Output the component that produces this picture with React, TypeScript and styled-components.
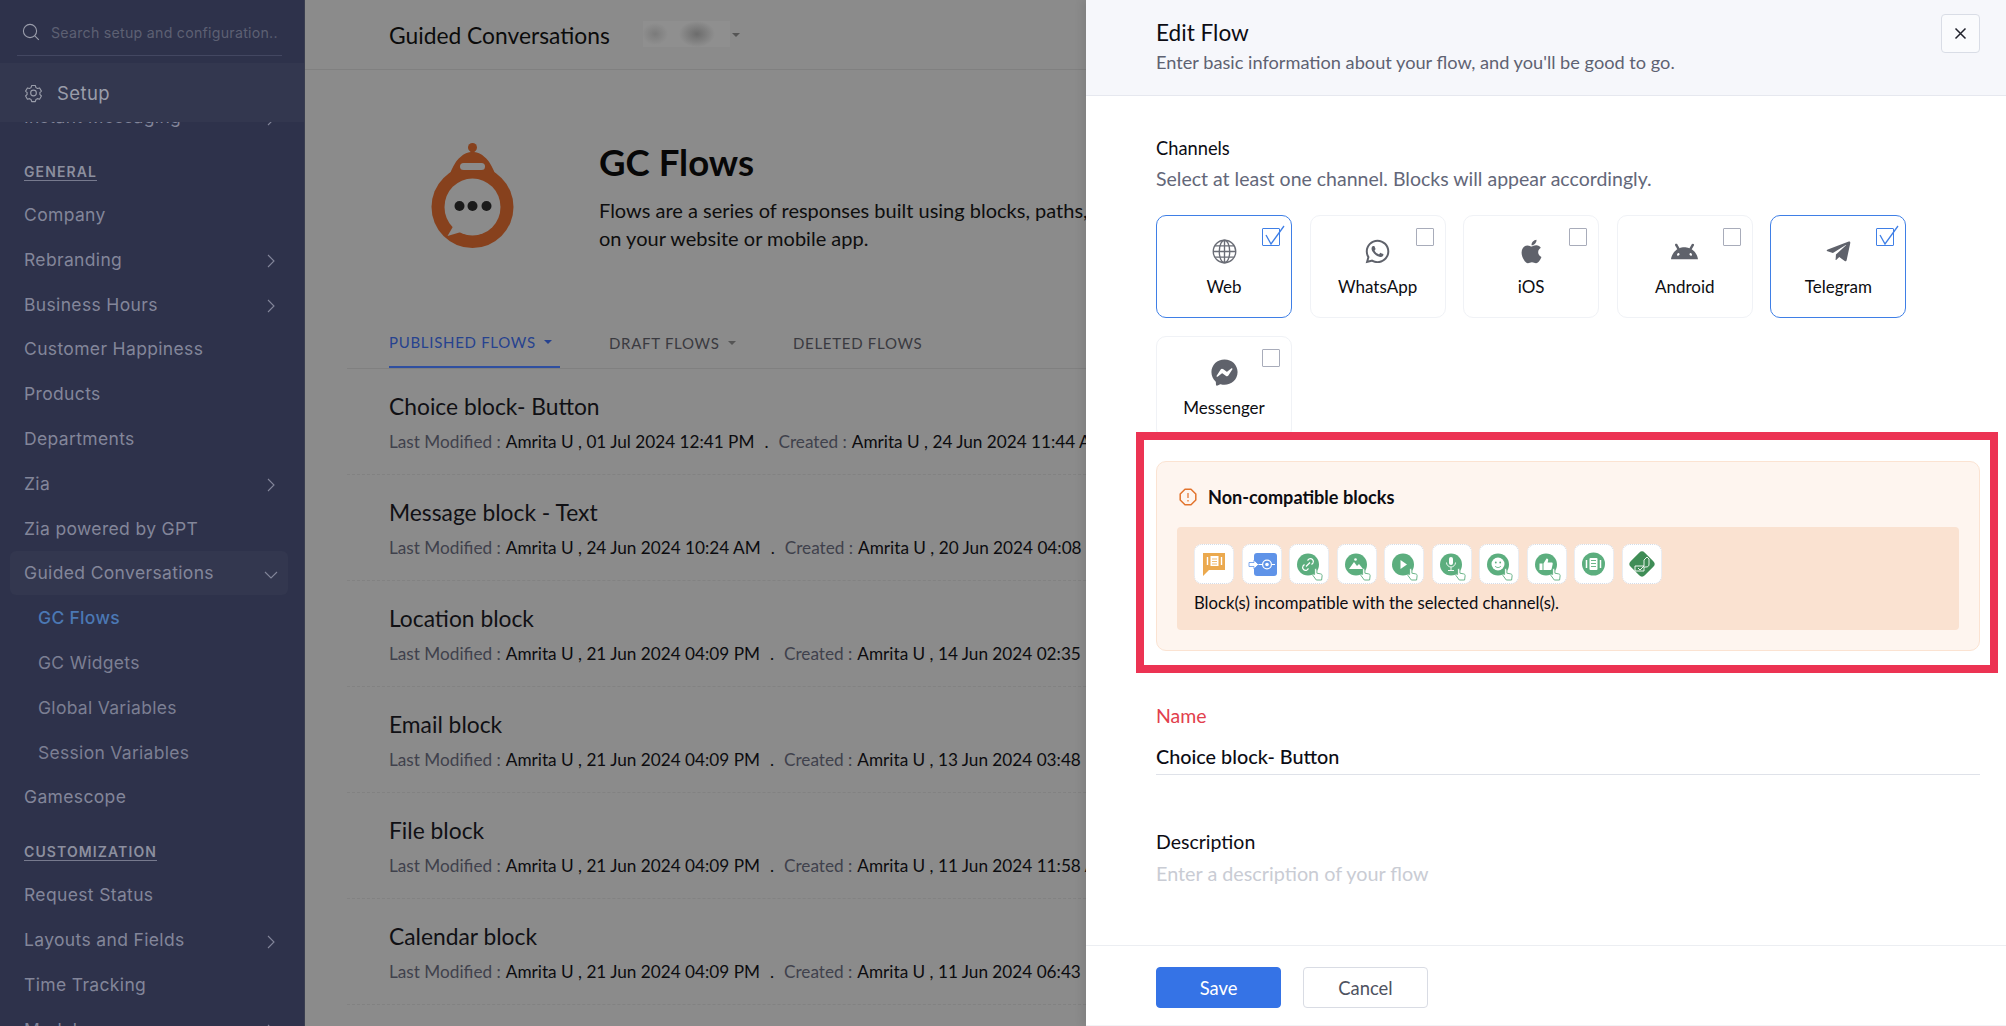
import React from 'react';
import styled, { createGlobalStyle } from 'styled-components';
import { FaWhatsapp, FaApple, FaTelegramPlane, FaFacebookMessenger } from 'react-icons/fa';
import { SiAndroid } from 'react-icons/si';

const Global = createGlobalStyle`
  html, body { margin: 0; padding: 0; height: 100%; overflow: hidden; background: #8b8b8b; }
  * { box-sizing: border-box; }
  body { font-family: Lato, "Open Sans", sans-serif; }
`;

const Page = styled.div`
  display: flex;
  width: 2006px;
  height: 1026px;
  overflow: hidden;
`;

/* ---------- sidebar ---------- */
const Sidebar = styled.aside`
  flex: none;
  width: 305px;
  height: 100%;
  display: flex;
  flex-direction: column;
  background: #2e324b;
  border-right: 1px solid #3a3e50;
  font-family: Inter, Roboto, sans-serif;
  overflow: hidden;
`;
const SearchBar = styled.div`
  flex: none;
  height: 63px;
  padding: 0 22px 0 17px;
`;
const SearchInner = styled.div`
  height: 56px;
  display: flex;
  align-items: center;
  gap: 11px;
  padding: 9px 0 0 5px;
  border-bottom: 1px solid #434761;
  color: #5d6073;
  font-size: 14.2px;
  letter-spacing: 0.25px;
  white-space: nowrap;
`;
const SetupBar = styled.div`
  flex: none;
  height: 59px;
  display: flex;
  align-items: center;
  gap: 14px;
  padding: 1px 0 0 24px;
  background: #33374f;
  color: #9a9daa;
  font-size: 18.5px;
  letter-spacing: 0.4px;
`;
const NavScroll = styled.div`
  flex: 1;
  min-height: 0;
  overflow: hidden;
  padding: 0 16px 0 10px;
`;
const NavInner = styled.nav`
  margin-top: -27.8px;
`;
const NavRow = styled.div<{ $open?: boolean }>`
  height: 44.8px;
  display: flex;
  align-items: center;
  justify-content: space-between;
  padding: 0 10px 0 14px;
  border-radius: 6px;
  color: #83869a;
  font-size: 17.5px;
  letter-spacing: 0.35px;
  white-space: nowrap;
  background: ${p => (p.$open ? '#33374f' : 'transparent')};
`;
const SubRow = styled.div<{ $active?: boolean }>`
  height: 44.8px;
  display: flex;
  align-items: center;
  padding-left: 28px;
  color: ${p => (p.$active ? '#4b78b4' : '#7c7f93')};
  font-size: 17.5px;
  letter-spacing: 0.3px;
  font-weight: ${p => (p.$active ? 500 : 400)};
  white-space: nowrap;
`;
const SectionHead = styled.div`
  height: 22px;
  margin: 21.6px 0 9.6px;
  padding-left: 14px;
  display: flex;
  align-items: center;
`;
const SectionLabel = styled.span`
  color: #8c8f9f;
  font-size: 14px;
  font-weight: 600;
  letter-spacing: 1.1px;
  border-bottom: 1px solid #777a8e;
  line-height: 17px;
`;

const Chevron = ({ down }: { down?: boolean }) => (
  <svg width="14" height="14" viewBox="0 0 14 14" fill="none" stroke="#83869a" strokeWidth="1.1" style={{ marginTop: 4 }}>
    {down ? <path d="M1 4l6 6 6-6" /> : <path d="M4 1l6 6-6 6" />}
  </svg>
);

/* ---------- main (dimmed) ---------- */
const Main = styled.main`
  flex: 1;
  min-width: 0;
  height: 100%;
  overflow: hidden;
  background: #8b8b8b;
`;
const TopBar = styled.header`
  height: 70px;
  padding-left: 84px;
  display: flex;
  align-items: center;
  border-bottom: 1px solid #808080;
`;
const TopTitle = styled.h1`
  margin: 1px 0 0;
  font-size: 22.8px;
  font-weight: 400;
  color: #0b0b0b;
  white-space: nowrap;
`;
const Redacted = styled.div`
  width: 87px;
  height: 26px;
  margin: 0 0 2px 33px;
  background:
    radial-gradient(ellipse 18px 13px at 62% 50%, #6c6c6c 0%, rgba(120, 120, 120, 0) 100%),
    radial-gradient(ellipse 13px 11px at 14% 50%, #7b7b7b 0%, rgba(130, 130, 130, 0) 100%),
    #8f8f8f;
`;
const Caret = styled.span<{ $color?: string }>`
  display: inline-block;
  width: 0;
  height: 0;
  border-left: 4px solid transparent;
  border-right: 4px solid transparent;
  border-top: 4px solid ${p => p.$color ?? '#555'};
`;
const TopCaret = styled(Caret)`
  margin: 0 0 0 2px;
`;
const Hero = styled.section`
  height: 248px;
  padding: 73px 0 0 126px;
  display: flex;
  gap: 85px;
`;
const HeroText = styled.div`
  margin-top: -3px;
  white-space: nowrap;
`;
const HeroTitle = styled.h2`
  margin: 0 0 12px;
  font-size: 36.6px;
  line-height: 44px;
  font-weight: 700;
  color: #070707;
`;
const HeroPara = styled.p`
  margin: 0;
  font-size: 20px;
  line-height: 28px;
  color: #0e0e0e;
`;
const ListArea = styled.div`
  margin-left: 42px;
`;
const Tabs = styled.div`
  height: 51px;
  display: flex;
  padding-left: 42px;
  border-bottom: 1px solid #808080;
`;
const Tab = styled.div<{ $active?: boolean; $w: number }>`
  width: ${p => p.$w}px;
  height: 50px;
  display: flex;
  align-items: center;
  gap: 8px;
  font-size: 15px;
  letter-spacing: 0.7px;
  white-space: nowrap;
  color: ${p => (p.$active ? '#26428f' : '#3a3a40')};
  border-bottom: ${p => (p.$active ? '2px solid #2f4fa0' : 'none')};
`;
const TabGap = styled.div<{ $w: number }>`
  flex: none;
  width: ${p => p.$w}px;
`;
const FlowRow = styled.div`
  height: 106px;
  padding: 23px 0 0 42px;
  border-bottom: 1px dashed #828282;
  white-space: nowrap;
`;
const FlowTitle = styled.div`
  font-size: 22.8px;
  line-height: 28px;
  color: #101014;
`;
const FlowMeta = styled.div`
  margin-top: 12px;
  font-size: 17.2px;
  line-height: 20px;
  color: #3f414c;
  display: flex;
`;
const MetaValue = styled.span`
  color: #0c0c0f;
  margin-left: 5px;
`;
const MetaDot = styled.span`
  color: #0c0c0f;
  margin: 0 10px;
`;

/* ---------- drawer ---------- */
const Drawer = styled.aside`
  flex: none;
  width: 920px;
  height: 100%;
  display: flex;
  flex-direction: column;
  background: #fff;
  box-shadow: -4px 0 8px rgba(0, 0, 0, 0.08);
  position: relative;
`;
const DrawerHead = styled.header`
  flex: none;
  height: 96px;
  padding: 18px 26px 0 70px;
  display: flex;
  justify-content: space-between;
  align-items: flex-start;
  background: #f6f7fb;
  border-bottom: 1px solid #e6e8ef;
`;
const DrawerTitle = styled.h2`
  margin: 0;
  font-size: 22.6px;
  line-height: 30px;
  font-weight: 400;
  color: #0c0c14;
`;
const DrawerSub = styled.p`
  margin: -1px 0 0;
  font-size: 18.2px;
  line-height: 30px;
  color: #5e6272;
`;
const CloseButton = styled.button`
  width: 39px;
  height: 39px;
  margin-top: -4px;
  padding: 0;
  display: flex;
  align-items: center;
  justify-content: center;
  background: #fafbfd;
  border: 1px solid #d9dde6;
  border-radius: 4px;
`;
const DrawerBody = styled.div`
  flex: 1;
  min-height: 0;
  padding: 39px 26px 0 70px;
`;
const GroupTitle = styled.div`
  font-size: 18.3px;
  line-height: 26px;
  color: #0c0c14;
`;
const GroupHint = styled.div`
  margin-top: 5px;
  font-size: 19.5px;
  line-height: 26px;
  color: #636779;
`;
const Cards = styled.div`
  margin-top: 23px;
  display: flex;
  flex-wrap: wrap;
  gap: 18px 17.6px;
`;
const Card = styled.div<{ $on?: boolean }>`
  position: relative;
  width: 136px;
  height: 103px;
  display: flex;
  flex-direction: column;
  align-items: center;
  padding-top: 22px;
  border-radius: 10px;
  border: ${p => (p.$on ? '1.5px solid #3f7fe6' : '1.5px solid #f0f2f6')};
`;
const CardIcon = styled.div`
  height: 26px;
  display: flex;
  align-items: center;
  justify-content: center;
  color: #5f626b;
  font-size: 27px;
`;
const CardLabel = styled.div`
  margin-top: 11px;
  font-size: 17px;
  line-height: 24px;
  color: #0d0d12;
`;
const Check = styled.div<{ $on?: boolean }>`
  position: absolute;
  top: 12px;
  right: 11px;
  width: 18px;
  height: 18px;
  border-radius: 1px;
  border: 1.5px solid ${p => (p.$on ? '#3f7fe6' : '#a8acba')};
`;
const Tick = styled.svg`
  position: absolute;
  top: -5.5px;
  left: -1.5px;
`;
const WarnWrap = styled.div`
  position: relative;
  margin-top: 22px;
`;
const RedFrame = styled.div`
  position: absolute;
  top: -29px;
  left: -20px;
  right: -18px;
  bottom: -22px;
  border: 8px solid #ec3353;
  pointer-events: none;
`;
const WarnPanel = styled.div`
  height: 190px;
  padding: 23px 20px 0;
  background: #fef5ef;
  border: 1px solid #fbe3d2;
  border-radius: 10px;
`;
const WarnHead = styled.div`
  height: 24px;
  margin-bottom: 18px;
  display: flex;
  align-items: center;
  gap: 11px;
  padding-left: 2px;
  font-size: 18.1px;
  font-weight: 700;
  color: #0c0c12;
`;
const WarnBox = styled.div`
  height: 103px;
  padding: 17px 17px 0;
  background: #fae2d1;
  border-radius: 4px;
`;
const Tiles = styled.div`
  display: flex;
  gap: 7.5px;
`;
const Tile = styled.div`
  width: 40px;
  height: 40px;
  background: #fff;
  border: 1px dotted #d3dce8;
  border-radius: 8px;
`;
const WarnText = styled.div`
  margin-top: 7px;
  font-size: 16.7px;
  line-height: 24px;
  color: #0c0c12;
`;
const Field = styled.div<{ $top: number }>`
  margin-top: ${p => p.$top}px;
`;
const FieldLabel = styled.div<{ $req?: boolean }>`
  font-size: 19.5px;
  line-height: 24px;
  color: ${p => (p.$req ? '#e2404d' : '#0c0c14')};
`;
const FieldValue = styled.div`
  margin-top: 15px;
  height: 32px;
  font-size: 19.8px;
  font-weight: 500;
  line-height: 26px;
  color: #0c0c14;
  border-bottom: 1.5px solid #dfe2e9;
`;
const FieldPlaceholder = styled.div`
  margin-top: 6px;
  font-size: 19.8px;
  line-height: 26px;
  color: #c9ccd4;
`;
const DrawerFoot = styled.footer`
  flex: none;
  height: 81px;
  padding: 21px 70px 0;
  display: flex;
  gap: 22px;
  border-top: 1.5px solid #eceef2;
  border-bottom: 1.5px solid #f2f3f6;
`;
const Button = styled.button<{ $primary?: boolean }>`
  width: 125px;
  height: 41px;
  font-family: inherit;
  font-size: 18.4px;
  border-radius: 4px;
  padding: 0;
  color: ${p => (p.$primary ? '#fff' : '#4e5260')};
  background: ${p => (p.$primary ? '#3573e6' : '#fff')};
  border: ${p => (p.$primary ? '1px solid #3573e6' : '1.5px solid #d9dce4')};
`;

/* ---------- drawings ---------- */
const SearchIcon = () => (
  <svg width="18" height="18" viewBox="0 0 18 18" fill="none" stroke="#9a9dab" strokeWidth="1.1">
    <circle cx="8" cy="8" r="6.6" />
    <path d="M12.8 12.8l4 4" />
  </svg>
);
const GearIcon = () => (
  <svg width="19" height="20" viewBox="0 0 24 24" fill="none" stroke="#9a9daa" strokeWidth="1.4" strokeLinejoin="round">
    <path d="M9.7 2.5h4.6l.8 2.7 1.9 1.1 2.7-.7 2.3 4-2 2 .1 1.1-.1 1.1 2 2-2.3 4-2.7-.7-1.9 1.1-.8 2.7H9.7l-.8-2.7-1.9-1.1-2.7.7-2.3-4 2-2-.1-1.1.1-1.1-2-2 2.3-4 2.7.7 1.9-1.1z" />
    <circle cx="12" cy="12" r="3.6" />
  </svg>
);
const GlobeIcon = () => (
  <svg width="25" height="25" viewBox="0 0 24 24" fill="none" stroke="#6a6d76" strokeWidth="1.3">
    <circle cx="12" cy="12" r="10.8" />
    <ellipse cx="12" cy="12" rx="5" ry="10.8" />
    <path d="M12 1.2v21.6M1.2 12h21.6M2.8 6.6h18.4M2.8 17.4h18.4" />
  </svg>
);
const CloseIcon = () => (
  <svg width="13" height="13" viewBox="0 0 13 13" stroke="#20222c" strokeWidth="1.5">
    <path d="M1.5 1.5l10 10M11.5 1.5l-10 10" />
  </svg>
);
const AlertIcon = () => (
  <svg width="18" height="18" viewBox="0 0 18 18" fill="none">
    <path d="M6 1.2h6L16.8 6v6L12 16.8H6L1.2 12V6z" stroke="#e2732c" strokeWidth="1.5" strokeLinejoin="round" />
    <path d="M9 5v5M9 12v1.4" stroke="#e2732c" strokeWidth="1.2" />
  </svg>
);
const Logo = () => (
  <svg width="83" height="105" viewBox="0 0 82 105" style={{ flex: 'none' }}>
    <circle cx="41" cy="4.5" r="4.5" fill="#87411d" />
    <rect x="39" y="4" width="4" height="8" fill="#87411d" />
    <path d="M15 40Q22 19 29 14Q34 9 41 9Q48 9 53 14Q60 19 67 40Z" fill="#87411d" />
    <ellipse cx="41" cy="64" rx="41" ry="41" fill="#87411d" />
    <rect x="28.5" y="20" width="25" height="7" rx="3.5" fill="#8b8b8b" />
    <ellipse cx="41" cy="64" rx="28" ry="28.5" fill="#8b8b8b" />
    <path d="M23 81L16 93L33 88Z" fill="#8b8b8b" />
    <circle cx="28" cy="63" r="5" fill="#1a1a1a" />
    <circle cx="41" cy="63" r="5" fill="#1a1a1a" />
    <circle cx="55" cy="63" r="5" fill="#1a1a1a" />
  </svg>
);

const Hand = () => (
  <path
    d="M25.5 23.5c.9 0 1.4.6 1.4 1.4v3.3l3.8.7c1 .2 1.5.9 1.4 1.9l-.5 4.2H26.3l-3.4-4.6c-.6-.9.6-1.8 1.4-1.1l.3.3v-4.7c0-.8.3-1.4.9-1.4z"
    fill="#fff"
    stroke="#5cae7e"
    strokeWidth="0.9"
  />
);
const GreenDot = () => <circle cx="18" cy="19.5" r="11" fill="#5cae7e" />;

const BlockGlyph = ({ kind }: { kind: string }) => {
  const w = { stroke: '#fff', strokeWidth: 1.2, fill: 'none' } as const;
  return (
    <svg width="38" height="38" viewBox="0 0 38 38">
      {kind === 'carousel' && (
        <>
          <path d="M8 8h22v17H14l-6 6z" fill="#eba94e" />
          <rect x="15.5" y="11" width="8" height="10" fill="#fff" />
          <path d="M12.5 12v8M26.5 12v8" stroke="#fff" strokeWidth="1.4" />
          <path d="M17 14h5M17 16.5h5M17 19h5" stroke="#eba94e" strokeWidth="0.8" />
        </>
      )}
      {kind === 'goto' && (
        <>
          <rect x="11" y="8" width="23" height="23" rx="3" fill="#5f93e8" />
          <path d="M6 17.5h5V15l4.5 4.5L11 24v-2.5H6z" fill="#fff" stroke="#5f93e8" strokeWidth="0.8" />
          <path d="M15.5 19.5h4M29 19.5h3" stroke="#fff" strokeWidth="1.2" />
          <circle cx="24" cy="19.5" r="4.4" {...w} />
          <circle cx="24" cy="19.5" r="1.8" fill="#fff" />
        </>
      )}
      {kind === 'link' && (
        <>
          <GreenDot />
          <path d="M16 21.500l4-4M14.500 19.500l-1.400 1.400a2.900 2.900 0 0 0 4 4l1.400-1.400M21.500 19.500l1.400-1.400a2.900 2.900 0 0 0-4-4l-1.400 1.400" {...w} />
          <Hand />
        </>
      )}
      {kind === 'image' && (
        <>
          <GreenDot />
          <path d="M11 24l5-7 3 4 2-2 4 5z" fill="#fff" />
          <circle cx="17.5" cy="14.5" r="1.3" fill="#fff" />
          <Hand />
        </>
      )}
      {kind === 'video' && (
        <>
          <GreenDot />
          <path d="M15.5 15l6.5 4.5-6.500 4.500z" fill="#fff" />
          <Hand />
        </>
      )}
      {kind === 'audio' && (
        <>
          <GreenDot />
          <rect x="16" y="12" width="4" height="8" rx="2" fill="#fff" />
          <path d="M13.5 17.5a4.500 4.500 0 0 0 9 0M18 22v3M15 25.500h6" stroke="#fff" strokeWidth="0.9" fill="none" />
          <Hand />
        </>
      )}
      {kind === 'smile' && (
        <>
          <GreenDot />
          <circle cx="18" cy="19" r="6.5" fill="#fff" />
          <circle cx="15.8" cy="17.5" r="0.9" fill="#5cae7e" />
          <circle cx="20.2" cy="17.5" r="0.9" fill="#5cae7e" />
          <path d="M15 21c1.500 2 4.500 2 6 0" stroke="#5cae7e" strokeWidth="0.9" fill="none" />
          <Hand />
        </>
      )}
      {kind === 'like' && (
        <>
          <GreenDot />
          <path d="M11.5 18.5h3V25h-3zM15.5 18.5l3-5c1.400 0 2 .9 1.600 2.200l-.5 1.800h4c.9 0 1.300.7 1.100 1.500l-1.100 5c-.2.600-.6 1-1.200 1h-6.900z" fill="#fff" />
          <Hand />
        </>
      )}
      {kind === 'form' && (
        <>
          <circle cx="18.5" cy="19" r="11.5" fill="#5cae7e" />
          <rect x="14.5" y="13" width="8" height="12" rx="1" fill="#fff" />
          <path d="M11.5 15v8M25.5 15v8" stroke="#fff" strokeWidth="1.5" />
          <path d="M16 15.5h5M16 18.5h5M16 21.5h5" stroke="#5cae7e" strokeWidth="0.9" />
        </>
      )}
      {kind === 'path' && (
        <>
          <rect x="9" y="9" width="20" height="20" rx="4" fill="#3f8d56" transform="rotate(45 19 19)" />
          <path d="M12 26v-5h9v-6l3-3 2 2v5c0 2-1 3-3 3h-2v4z" stroke="#fff" strokeWidth="0.9" fill="none" />
          <path d="M15 23l2 2 4-4" stroke="#fff" strokeWidth="0.9" fill="none" />
        </>
      )}
    </svg>
  );
};

/* ---------- data ---------- */
const generalTop = ['Company', 'Rebranding', 'Business Hours', 'Customer Happiness', 'Products', 'Departments', 'Zia', 'Zia powered by GPT'];
const withArrow = new Set(['Rebranding', 'Business Hours', 'Zia', 'Layouts and Fields', 'Instant Messaging', 'Modules']);
const sub = ['GC Flows', 'GC Widgets', 'Global Variables', 'Session Variables'];
const custom = ['Request Status', 'Layouts and Fields', 'Time Tracking', 'Modules'];
const channels = [
  { name: 'Web', on: true, icon: <GlobeIcon /> },
  { name: 'WhatsApp', icon: <FaWhatsapp /> },
  { name: 'iOS', icon: <FaApple /> },
  { name: 'Android', icon: <SiAndroid /> },
  { name: 'Telegram', on: true, icon: <FaTelegramPlane /> },
  { name: 'Messenger', icon: <FaFacebookMessenger /> },
];
const blocks = ['carousel', 'goto', 'link', 'image', 'video', 'audio', 'smile', 'like', 'form', 'path'];
const flows = [
  ['Choice block- Button', '01 Jul 2024 12:41 PM', '24 Jun 2024 11:44 AM'],
  ['Message block - Text', '24 Jun 2024 10:24 AM', '20 Jun 2024 04:08 PM'],
  ['Location block', '21 Jun 2024 04:09 PM', '14 Jun 2024 02:35 PM'],
  ['Email block', '21 Jun 2024 04:09 PM', '13 Jun 2024 03:48 PM'],
  ['File block', '21 Jun 2024 04:09 PM', '11 Jun 2024 11:58 AM'],
  ['Calendar block', '21 Jun 2024 04:09 PM', '11 Jun 2024 06:43 PM'],
];

const Row = ({ label }: { label: string }) => (
  <NavRow>
    <span>{label}</span>
    {withArrow.has(label) && <Chevron />}
  </NavRow>
);

export default function App() {
  return (
    <Page>
      <Global />
      <Sidebar>
        <SearchBar>
          <SearchInner>
            <SearchIcon />
            <span>Search setup and configuration..</span>
          </SearchInner>
        </SearchBar>
        <SetupBar>
          <GearIcon />
          <span>Setup</span>
        </SetupBar>
        <NavScroll>
          <NavInner>
            <Row label="Instant Messaging" />
            <SectionHead><SectionLabel>GENERAL</SectionLabel></SectionHead>
            {generalTop.map(l => <Row key={l} label={l} />)}
            <NavRow $open>
              <span>Guided Conversations</span>
              <Chevron down />
            </NavRow>
            {sub.map((l, i) => <SubRow key={l} $active={i === 0}>{l}</SubRow>)}
            <Row label="Gamescope" />
            <SectionHead><SectionLabel>CUSTOMIZATION</SectionLabel></SectionHead>
            {custom.map(l => <Row key={l} label={l} />)}
          </NavInner>
        </NavScroll>
      </Sidebar>

      <Main>
        <TopBar>
          <TopTitle>Guided Conversations</TopTitle>
          <Redacted />
          <TopCaret />
        </TopBar>
        <Hero>
          <Logo />
          <HeroText>
            <HeroTitle>GC Flows</HeroTitle>
            <HeroPara>Flows are a series of responses built using blocks, paths,<br />on your website or mobile app.</HeroPara>
          </HeroText>
        </Hero>
        <ListArea>
          <Tabs>
            <Tab $active $w={171}>PUBLISHED FLOWS <Caret $color="#26428f" /></Tab>
            <TabGap $w={49} />
            <Tab $w={184}>DRAFT FLOWS <Caret /></Tab>
            <Tab $w={160}>DELETED FLOWS</Tab>
          </Tabs>
          {flows.map(([t, m, c]) => (
            <FlowRow key={t}>
              <FlowTitle>{t}</FlowTitle>
              <FlowMeta>
                Last Modified :<MetaValue>Amrita U , {m}</MetaValue>
                <MetaDot>.</MetaDot>
                Created :<MetaValue>Amrita U , {c}</MetaValue>
              </FlowMeta>
            </FlowRow>
          ))}
        </ListArea>
      </Main>

      <Drawer>
        <DrawerHead>
          <div>
            <DrawerTitle>Edit Flow</DrawerTitle>
            <DrawerSub>Enter basic information about your flow, and you'll be good to go.</DrawerSub>
          </div>
          <CloseButton aria-label="Close"><CloseIcon /></CloseButton>
        </DrawerHead>
        <DrawerBody>
          <GroupTitle>Channels</GroupTitle>
          <GroupHint>Select at least one channel. Blocks will appear accordingly.</GroupHint>
          <Cards>
            {channels.map(c => (
              <Card key={c.name} $on={c.on}>
                <CardIcon>{c.icon}</CardIcon>
                <CardLabel>{c.name}</CardLabel>
                <Check $on={c.on}>
                  {c.on && (
                    <Tick width="24" height="24" viewBox="0 0 24 24" fill="none" stroke="#3f7fe6" strokeWidth="1.3">
                      <path d="M4 11l5 9L22 2" />
                    </Tick>
                  )}
                </Check>
              </Card>
            ))}
          </Cards>
          <WarnWrap>
            <WarnPanel>
              <WarnHead><AlertIcon /><span>Non-compatible blocks</span></WarnHead>
              <WarnBox>
                <Tiles>
                  {blocks.map(b => <Tile key={b}><BlockGlyph kind={b} /></Tile>)}
                </Tiles>
                <WarnText>Block(s) incompatible with the selected channel(s).</WarnText>
              </WarnBox>
            </WarnPanel>
            <RedFrame />
          </WarnWrap>
          <Field $top={53}>
            <FieldLabel $req>Name</FieldLabel>
            <FieldValue>Choice block- Button</FieldValue>
          </Field>
          <Field $top={55}>
            <FieldLabel>Description</FieldLabel>
            <FieldPlaceholder>Enter a description of your flow</FieldPlaceholder>
          </Field>
        </DrawerBody>
        <DrawerFoot>
          <Button $primary>Save</Button>
          <Button>Cancel</Button>
        </DrawerFoot>
      </Drawer>
    </Page>
  );
}
